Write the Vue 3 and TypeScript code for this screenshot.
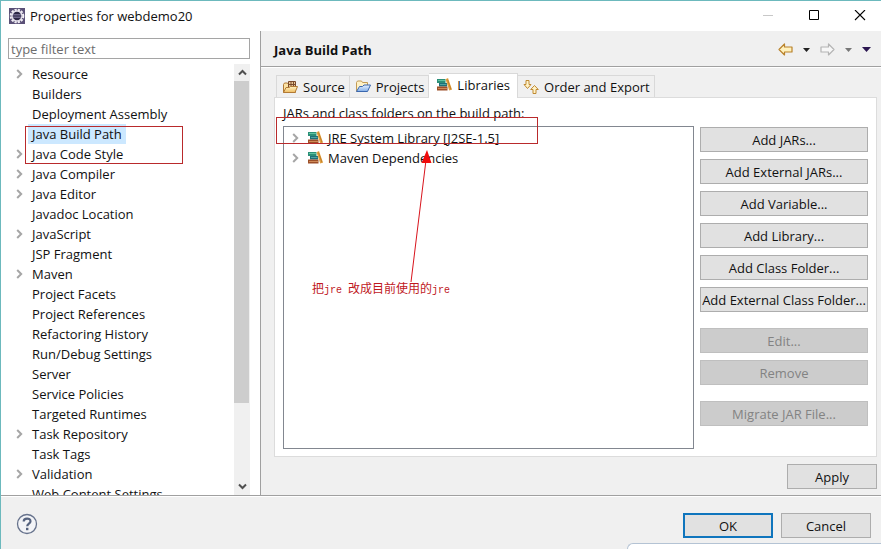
<script setup lang="ts">
import { ref } from 'vue'

interface TreeNode {
  label: string
  expandable?: boolean
}

const pages: TreeNode[] = [
  { label: 'Resource', expandable: true },
  { label: 'Builders' },
  { label: 'Deployment Assembly' },
  { label: 'Java Build Path' },
  { label: 'Java Code Style', expandable: true },
  { label: 'Java Compiler', expandable: true },
  { label: 'Java Editor', expandable: true },
  { label: 'Javadoc Location' },
  { label: 'JavaScript', expandable: true },
  { label: 'JSP Fragment' },
  { label: 'Maven', expandable: true },
  { label: 'Project Facets' },
  { label: 'Project References' },
  { label: 'Refactoring History' },
  { label: 'Run/Debug Settings' },
  { label: 'Server' },
  { label: 'Service Policies' },
  { label: 'Targeted Runtimes' },
  { label: 'Task Repository', expandable: true },
  { label: 'Task Tags' },
  { label: 'Validation', expandable: true },
  { label: 'Web Content Settings' },
]

const tabs = ['Source', 'Projects', 'Libraries', 'Order and Export']
const libraries = ['JRE System Library [J2SE-1.5]', 'Maven Dependencies']
const addActions = [
  'Add JARs...',
  'Add External JARs...',
  'Add Variable...',
  'Add Library...',
  'Add Class Folder...',
  'Add External Class Folder...',
]
const editActions = ['Edit...', 'Remove']

const filter = ref('')
const selectedPage = ref('Java Build Path')
const activeTab = ref('Libraries')
</script>

<template>
  <div class="window">
    <svg class="defs" aria-hidden="true">
      <defs>
        <linearGradient id="folder-yellow" x1="0" y1="0" x2="0" y2="1">
          <stop offset="0" stop-color="#fff3c4" />
          <stop offset="1" stop-color="#efbd62" />
        </linearGradient>
        <linearGradient id="folder-blue" x1="0" y1="0" x2="0" y2="1">
          <stop offset="0" stop-color="#e4f0ff" />
          <stop offset="1" stop-color="#83aee8" />
        </linearGradient>
        <symbol id="books" viewBox="0 0 16 16">
          <path d="M1 2h8.500v4H1z" fill="#2b8f78" />
          <path d="M2 3.500h7" stroke="#5fc3a0" stroke-width="1" />
          <path d="M3 6h8v3.500H3z" fill="#1f6f78" />
          <path d="M4 7.500h6.500" stroke="#4fa5a0" stroke-width="1" />
          <path d="M1 9.500h10.500v4H1z" fill="#9c4f28" />
          <path d="M2 11.500h9" stroke="#d08a58" stroke-width="1" />
          <path d="M9.500 2.200l2.500-1.200 4 11.500-2.800 1z" fill="#e2a243" />
          <path d="M11.500 2.500l3.500 10" stroke="#b9761f" stroke-width=".8" />
        </symbol>
      </defs>
    </svg>

    <header class="titlebar">
      <svg class="app-icon" width="16" height="16" viewBox="0 0 16 16" aria-hidden="true">
        <rect width="16" height="16" fill="#5a5077" />
        <circle cx="8" cy="8" r="6.300" fill="none" stroke="#f2eff5" stroke-width="2" stroke-dasharray="2.300 1" />
        <circle cx="8" cy="8" r="5" fill="#2c2745" stroke="#e6e2ec" stroke-width="1.400" />
        <path d="M4 6.500h8M3.500 8h9M4 9.500h8" stroke="#8a83a8" stroke-width=".7" />
      </svg>
      <h1>Properties for webdemo20</h1>
      <div class="window-controls">
        <button type="button" aria-label="Minimize" disabled>
          <svg width="12" height="12" viewBox="0 0 12 12"><path d="M1 5.500h10" stroke="#c8c8c8" /></svg>
        </button>
        <button type="button" aria-label="Maximize">
          <svg width="12" height="12" viewBox="0 0 12 12"><path d="M1.500 .500h9v9h-9z" fill="none" stroke="#000" /></svg>
        </button>
        <button type="button" aria-label="Close">
          <svg width="12" height="12" viewBox="0 0 12 12"><path d="M1 0l10 10M11 0L1 10" stroke="#000" stroke-width="1.100" /></svg>
        </button>
      </div>
    </header>

    <main class="content">
      <aside class="sidebar">
        <input v-model="filter" class="filter" type="text" placeholder="type filter text" aria-label="Filter" />
        <div class="tree-area">
          <ul class="tree">
            <li v-for="page in pages" :key="page.label">
              <span class="twisty">
                <svg v-if="page.expandable" width="7" height="10" viewBox="0 0 7 10"><path d="M1.200 1l4 4-4 4" /></svg>
              </span>
              <button
                type="button"
                class="node"
                :class="{ selected: page.label === selectedPage }"
                @click="selectedPage = page.label"
              >{{ page.label }}</button>
            </li>
          </ul>
          <div class="scrollbar" aria-hidden="true">
            <span class="scroll-end"><svg width="9" height="7" viewBox="0 0 9 7"><path d="M1 5.500l3.500-3.500L8 5.500" /></svg></span>
            <span class="thumb"></span>
            <span class="track"></span>
            <span class="scroll-end"><svg width="9" height="7" viewBox="0 0 9 7"><path d="M1 1.500L4.500 5 8 1.500" /></svg></span>
          </div>
        </div>
        <div class="mark mark-page"></div>
      </aside>

      <section class="page">
        <div class="page-header">
          <h2>Java Build Path</h2>
          <div class="nav">
            <button type="button" aria-label="Back">
              <svg width="15" height="13" viewBox="0 0 15 13"><path d="M1 6.500L6.500 1v3H14v5H6.500v3z" fill="#fff1bd" stroke="#b9822b" stroke-width="1.200" stroke-linejoin="round" /></svg>
            </button>
            <button type="button" aria-label="Back history">
              <svg width="7" height="4" viewBox="0 0 7 4"><path d="M0 0h7L3.500 4z" fill="#222" /></svg>
            </button>
            <button type="button" aria-label="Forward" disabled>
              <svg width="15" height="13" viewBox="0 0 15 13"><path d="M14 6.500L8.500 1v3H1v5h7.500v3z" fill="#f7f7f7" stroke="#b4b4b4" stroke-width="1.200" stroke-linejoin="round" /></svg>
            </button>
            <button type="button" aria-label="Forward history">
              <svg width="7" height="4" viewBox="0 0 7 4"><path d="M0 0h7L3.500 4z" fill="#777" /></svg>
            </button>
            <button type="button" aria-label="Menu">
              <svg width="9" height="5" viewBox="0 0 9 5"><path d="M0 0h9L4.500 5z" fill="#2b1650" /></svg>
            </button>
          </div>
        </div>

        <div class="page-body">
          <div class="tabs" role="tablist">
            <button
              v-for="tab in tabs"
              :key="tab"
              type="button"
              role="tab"
              class="tab"
              :class="{ active: tab === activeTab }"
              :aria-selected="tab === activeTab"
              @click="activeTab = tab"
            >
              <svg v-if="tab === 'Source'" width="16" height="16" viewBox="0 0 16 16">
                <path d="M1.500 13.500v-8l1-1.500h3l1 1.500h7v8z" fill="#fbe3a6" stroke="#b27a35" />
                <path d="M6.500 2.500h7v6h-7z" fill="#e9c999" stroke="#7a4a2c" />
                <path d="M6.500 5.500h7M9 2v6.500M11.500 2v6.500" stroke="#7a4a2c" fill="none" />
                <path d="M1.500 13.500l2.500-5h3l1.500-1h7l-2.500 6z" fill="url(#folder-yellow)" stroke="#b27a35" stroke-linejoin="round" />
              </svg>
              <svg v-else-if="tab === 'Projects'" width="16" height="16" viewBox="0 0 16 16">
                <path d="M1.500 12.500v-9l1-1.500h4l1 1.500h5v3.500" fill="#fff1c5" stroke="#c39b54" stroke-linejoin="round" />
                <path d="M1.500 12.500l3-5h3l1.500-1.500h6.500l-3 6.500z" fill="url(#folder-blue)" stroke="#3a67ae" stroke-linejoin="round" />
              </svg>
              <svg v-else-if="tab === 'Libraries'" width="16" height="16" viewBox="0 0 16 16"><use href="#books" /></svg>
              <svg v-else width="16" height="16" viewBox="0 0 16 16">
                <path d="M3 1.500h3v4h2l-3.500 4-3.500-4h2z" fill="#fff3c9" stroke="#c08a32" stroke-linejoin="round" />
                <path d="M11.500 6.500l3.800 4h-2.300v4h-3v-4h-2.300z" fill="#fff3c9" stroke="#c08a32" stroke-linejoin="round" />
              </svg>
              <span>{{ tab }}</span>
            </button>
          </div>

          <div class="panel" role="tabpanel">
            <p id="list-label" class="list-label">JARs and class folders on the build path:</p>
            <div class="panel-row">
              <ul class="libraries" aria-labelledby="list-label">
                <li v-for="library in libraries" :key="library">
                  <svg class="chevron" width="7" height="10" viewBox="0 0 7 10"><path d="M1.200 1l4 4-4 4" /></svg>
                  <svg width="16" height="16" viewBox="0 0 16 16"><use href="#books" /></svg>
                  <span>{{ library }}</span>
                </li>
              </ul>
              <div class="actions">
                <button v-for="action in addActions" :key="action" type="button" class="btn">{{ action }}</button>
                <div class="action-group">
                  <button v-for="action in editActions" :key="action" type="button" class="btn" disabled>{{ action }}</button>
                </div>
                <div class="action-group">
                  <button type="button" class="btn" disabled>Migrate JAR File...</button>
                </div>
              </div>
            </div>

            <div class="mark mark-library"></div>
            <svg class="pointer" width="30" height="138" viewBox="0 0 30 138" aria-hidden="true">
              <path d="M4 136L19 14" stroke="#d8141c" />
              <path d="M20 4l4.500 13h-10z" fill="#f00a0a" />
            </svg>
            <p class="note">把<span>jre </span>改成目前使用的<span>jre</span></p>
          </div>

          <div class="apply-row">
            <button type="button" class="btn short">Apply</button>
          </div>
        </div>
      </section>
    </main>

    <footer class="footer">
      <button type="button" class="help" aria-label="Help">
        <svg width="22" height="22" viewBox="0 0 22 22">
          <circle cx="11" cy="11" r="9.500" fill="#f3f4f7" stroke="#66728c" stroke-width="1.300" />
          <path d="M7.700 8.600c0-4 6.800-4 6.800-.3 0 2.400-3.300 2.400-3.300 5" fill="none" stroke="#56637f" stroke-width="2.200" />
          <rect x="10" y="14.800" width="2.400" height="2.400" fill="#56637f" />
        </svg>
      </button>
      <div class="footer-buttons">
        <button type="button" class="btn short primary">OK</button>
        <button type="button" class="btn short">Cancel</button>
      </div>
      <div class="behind"></div>
    </footer>
  </div>
</template>

<style>
body {
  margin: 0;
  background: #f0f0f0;
}
</style>

<style scoped>
* {
  box-sizing: border-box;
}

.window {
  display: flex;
  flex-direction: column;
  height: 100vh;
  overflow: hidden;
  border-top: 1px solid #6cb9bd;
  border-left: 1px solid #6cb9bd;
  background: #f0f0f0;
  color: #111;
  font: 13px/20px "Open Sans", "Noto Sans", "Noto Sans CJK SC", sans-serif;
}

.defs {
  position: absolute;
  width: 0;
  height: 0;
}

svg {
  display: block;
  flex: none;
}

button {
  margin: 0;
  padding: 0;
  border: 0;
  background: none;
  color: inherit;
  font: inherit;
}

h1,
h2,
p,
ul {
  margin: 0;
  padding: 0;
  list-style: none;
}

.titlebar {
  display: flex;
  flex: none;
  align-items: center;
  height: 30px;
  padding-left: 8px;
  background: #fff;
}

h1 {
  flex: 1;
  margin-left: 5px;
  font-size: 13px;
  font-weight: 400;
}

.window-controls {
  display: flex;
  margin-right: -2px;
}

.window-controls button {
  display: grid;
  place-items: center;
  width: 46px;
  height: 30px;
}

.content {
  display: flex;
  flex: 1;
  min-height: 0;
}

.sidebar {
  position: relative;
  display: flex;
  flex: none;
  flex-direction: column;
  width: 260px;
  padding: 7px 10px 0 7px;
  border-right: 1px solid #a0a0a0;
  background: #fff;
}

.filter {
  flex: none;
  width: 100%;
  height: 21px;
  margin-bottom: 5px;
  padding: 0 2px;
  border: 1px solid #a5a5a5;
  background: #fff;
  color: #111;
  font: inherit;
}

.filter::placeholder {
  color: #6d6d6d;
  opacity: 1;
}

.tree-area {
  display: flex;
  flex: 1;
  min-height: 0;
}

.tree {
  flex: 1;
  overflow: hidden;
}

.tree li {
  display: flex;
  align-items: center;
  height: 20px;
}

.twisty {
  width: 20px;
  padding-left: 8px;
}

.twisty path,
.chevron path {
  fill: none;
  stroke: #a6a6a6;
  stroke-width: 2;
}

.node {
  height: 20px;
  padding: 0 4px;
  white-space: nowrap;
}

.node.selected {
  background: #cce8ff;
}

.scrollbar {
  display: flex;
  flex-direction: column;
  width: 16px;
  background: #f0f0f0;
}

.scroll-end {
  display: grid;
  flex: none;
  place-items: center;
  height: 17px;
}

.scroll-end path {
  fill: none;
  stroke: #505050;
  stroke-width: 2;
}

.thumb {
  flex: 81;
  margin-right: 1px;
  background: #cdcdcd;
}

.track {
  flex: 19;
}

.page {
  display: flex;
  flex: 1;
  flex-direction: column;
  min-width: 0;
}

.page-header {
  display: flex;
  flex: none;
  align-items: center;
  justify-content: space-between;
  height: 36px;
  padding: 2px 10px 0 13px;
  border-bottom: 1px solid #a0a0a0;
}

h2 {
  font-size: 13px;
  font-weight: 700;
}

.nav {
  display: flex;
  align-items: center;
  gap: 10px;
}

.page-body {
  display: flex;
  flex: 1;
  flex-direction: column;
  min-height: 0;
  padding: 5px 4px 6px 13px;
  border-top: 1px solid #fff;
}

.tabs {
  display: flex;
  align-items: flex-end;
  padding-left: 2px;
}

.tab {
  display: flex;
  flex: none;
  align-items: center;
  gap: 5px;
  height: 22px;
  padding: 0 4px 0 5px;
  border: 1px solid #d9d9d9;
  border-bottom: 0;
  border-left: 0;
  white-space: nowrap;
}

.tab:first-child {
  border-left: 1px solid #d9d9d9;
}

.tab.active {
  z-index: 1;
  height: 25px;
  margin-bottom: -1px;
  padding: 0 7px 3px;
  background: #fff;
}

.panel {
  position: relative;
  display: flex;
  flex: 1;
  flex-direction: column;
  min-height: 0;
  padding: 5px 8px 7px 8px;
  border: 1px solid #dcdcdc;
  background: #fff;
}

.list-label {
  margin-bottom: 3px;
}

.panel-row {
  display: flex;
  flex: 1;
  gap: 6px;
  min-height: 0;
}

.libraries {
  flex: 1;
  padding-top: 1px;
  border: 1px solid #828790;
}

.libraries li {
  display: flex;
  align-items: center;
  gap: 5px;
  height: 20px;
  padding-left: 8px;
}

.chevron {
  margin-right: 3px;
}

.actions {
  display: flex;
  flex: none;
  flex-direction: column;
  gap: 7px;
  width: 168px;
  padding-top: 1px;
}

.action-group {
  display: flex;
  flex-direction: column;
  gap: 7px;
  margin-top: 9px;
}

.btn {
  height: 25px;
  border: 1px solid #adadad;
  background: #e1e1e1;
  white-space: nowrap;
}

.btn:disabled {
  border-color: #bfbfbf;
  background: #ccc;
  color: #838383;
}

.btn.short {
  width: 90px;
}

.btn.primary {
  border: 2px solid #0f75bd;
}

.apply-row {
  display: flex;
  flex: none;
  justify-content: flex-end;
  padding-top: 7px;
}

.footer {
  position: relative;
  display: flex;
  flex: none;
  align-items: flex-start;
  justify-content: space-between;
  height: 54px;
  padding: 17px 10px 0 15px;
  border-top: 1px solid #a0a0a0;
  box-shadow: inset 0 1px #fff;
}

.footer-buttons {
  display: flex;
  gap: 8px;
}

.behind {
  position: absolute;
  right: 0;
  bottom: 0;
  width: 254px;
  height: 6px;
  border-top: 1px solid #b4c3d4;
  border-left: 1px solid #b4c3d4;
  border-top-left-radius: 6px;
  background: #fff;
}

/* Red annotations laid over the dialog */
.mark {
  position: absolute;
  border: 1px solid #b92a2c;
  pointer-events: none;
}

.mark-page {
  top: 95px;
  left: 24px;
  width: 158px;
  height: 38px;
}

.mark-library {
  top: 19px;
  left: 1px;
  width: 262px;
  height: 27px;
}

.pointer {
  position: absolute;
  top: 48px;
  left: 132px;
}

.note {
  position: absolute;
  top: 180px;
  left: 37px;
  color: #c0181e;
  font-family: "Noto Sans CJK SC", sans-serif;
  font-size: 12px;
  line-height: 20px;
  white-space: pre;
}

.note span {
  font-family: "Liberation Mono", monospace;
  font-size: 10px;
}
</style>
